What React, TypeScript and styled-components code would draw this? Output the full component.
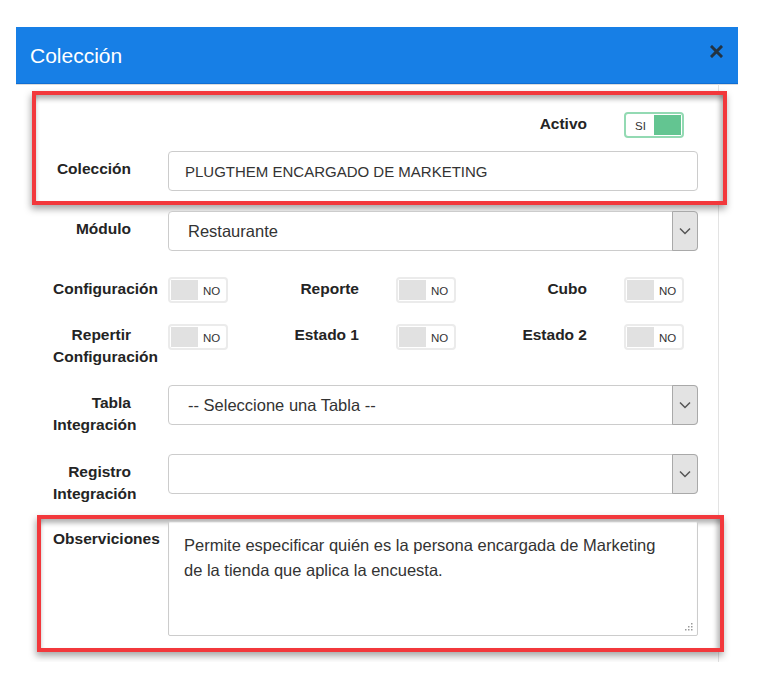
import React from "react";
import styled, { createGlobalStyle } from "styled-components";

const GlobalStyle = createGlobalStyle`
  html, body { margin: 0; padding: 0; background: #fff; }
  body { font-family: "Liberation Sans", Arial, sans-serif; color: #333; }
  *, *::before, *::after { box-sizing: border-box; }
`;

const Modal = styled.div`
  width: 722px;
  margin: 27px 0 0 16px;
`;

const Header = styled.header`
  height: 57px;
  background: #177fe6;
  border-bottom: 1px solid #0f6ed3;
  box-shadow: 0 1px 0 #dcdcdc;
  display: flex;
  justify-content: space-between;
  align-items: flex-start;
  padding: 0 15px 0 14px;
`;

const Title = styled.h4`
  margin: 0;
  font-weight: normal;
  font-size: 21px;
  line-height: 57px;
  color: #fff;
`;

const Close = styled.button`
  margin-top: 18px;
  width: 13px;
  height: 13px;
  padding: 0;
  border: none;
  background: transparent;
  display: flex;
  cursor: pointer;
`;

const Body = styled.div`
  width: 703px;
  padding: 1px 20px 10px 37px;
  border-right: 1px solid #e3e3e3;
  display: flex;
  flex-direction: column;
`;

const Highlight = styled.section<{ $m: string; $p: string; $gap: number }>`
  margin: ${(p) => p.$m};
  padding: ${(p) => p.$p};
  border: 4px solid #f2383c;
  background: #fff;
  display: flex;
  flex-direction: column;
  gap: ${(p) => p.$gap}px;
  box-shadow: inset 0 8px 5px -4px rgba(0, 0, 0, 0.3),
    inset -7px 0 5px -4px rgba(0, 0, 0, 0.28),
    inset 4px 0 4px -4px rgba(0, 0, 0, 0.22),
    -1px 4px 7px rgba(0, 0, 0, 0.35);
`;

const Field = styled.div<{ $mt?: number }>`
  display: flex;
  align-items: flex-start;
  gap: 37px;
  margin-top: ${(p) => p.$mt ?? 0}px;
`;

const Label = styled.label<{ $pt: number }>`
  flex: 0 0 78px;
  width: 78px;
  min-width: 0;
  text-align: right;
  font-weight: bold;
  font-size: 15.5px;
  line-height: 21.5px;
  color: #242424;
  padding-top: ${(p) => p.$pt}px;
`;

const ToggleGrid = styled.div<{ $mt?: number }>`
  display: grid;
  grid-template-columns: 228px 228px 1fr;
  row-gap: 21px;
  margin-top: ${(p) => p.$mt ?? 0}px;
`;

const ToggleCell = styled.div<{ $col?: number }>`
  display: flex;
  align-items: flex-start;
  gap: 37px;
  grid-column: ${(p) => p.$col ?? "auto"};
`;

const Switch = styled.span<{ $on?: boolean }>`
  flex: none;
  width: 60px;
  height: 26px;
  padding: 1px;
  border: 2px solid ${(p) => (p.$on ? "#93dab3" : "#ebebeb")};
  border-radius: 4px;
  background: #fff;
  display: flex;
  flex-direction: ${(p) => (p.$on ? "row-reverse" : "row")};
  align-items: center;
`;

const Knob = styled.span<{ $on?: boolean }>`
  flex: none;
  width: 27px;
  height: 20px;
  background: ${(p) => (p.$on ? "#63c591" : "#e1e1e1")};
`;

const SwitchText = styled.span`
  flex: 1;
  text-align: center;
  font-size: 11.5px;
  line-height: 20px;
  padding-top: 2px;
  color: #333;
`;

const TextInput = styled.input`
  flex: 1;
  min-width: 0;
  height: 40px;
  padding: 0 16px;
  border: 1px solid #cccccc;
  border-radius: 4px;
  font-family: inherit;
  font-size: 15px;
  color: #333;
  background: #fff;
  outline: none;
`;

const SelectBox = styled.div`
  flex: 1;
  min-width: 0;
  height: 40px;
  display: flex;
  border: 1px solid #cccccc;
  border-radius: 4px;
  background: #fff;
`;

const NativeSelect = styled.select`
  flex: 1;
  min-width: 0;
  appearance: none;
  -webkit-appearance: none;
  border: none;
  background: transparent;
  padding: 0 0 0 19px;
  font-family: inherit;
  font-size: 16.5px;
  color: #333;
  outline: none;
`;

const ArrowBox = styled.span`
  flex: none;
  width: 26px;
  margin: -1px -1px -1px 0;
  border: 1px solid #a9a9a9;
  border-radius: 0 4px 4px 0;
  background: #e3e3e3;
  display: flex;
  align-items: center;
  justify-content: center;
`;

const AreaWrap = styled.div`
  flex: 1;
  min-width: 0;
  position: relative;
  display: flex;
`;

const TextArea = styled.textarea`
  width: 100%;
  height: 115px;
  resize: none;
  padding: 11px 15px 9px;
  border: 1px solid #cccccc;
  border-radius: 2px;
  box-shadow: inset 0 1px 1px rgba(0, 0, 0, 0.08);
  font-family: inherit;
  font-size: 16.5px;
  line-height: 25px;
  color: #333;
  outline: none;
`;

const Grip = styled.svg`
  position: absolute;
  right: 5px;
  bottom: 5px;
  pointer-events: none;
`;

const Chevron = () => (
  <svg width="12" height="8" viewBox="0 0 12 8">
    <path d="M1 1.5 L6 6.5 L11 1.5" fill="none" stroke="#555" strokeWidth="1.5" />
  </svg>
);

const Toggle = ({ on, text }: { on?: boolean; text: string }) => (
  <Switch $on={on}>
    <Knob $on={on} />
    <SwitchText>{text}</SwitchText>
  </Switch>
);

const Select = ({ value }: { value: string }) => (
  <SelectBox>
    <NativeSelect value={value} onChange={() => {}}>
      <option value={value}>{value}</option>
    </NativeSelect>
    <ArrowBox>
      <Chevron />
    </ArrowBox>
  </SelectBox>
);

export default function App() {
  return (
    <>
      <GlobalStyle />
      <Modal>
        <Header>
          <Title>Colección</Title>
          <Close aria-label="Cerrar">
            <svg width="13" height="13" viewBox="0 0 13 13">
              <path d="M2 2 L11 11 M11 2 L2 11" stroke="#262626" strokeWidth="3" strokeLinecap="square" opacity="0.85" />
            </svg>
          </Close>
        </Header>
        <Body>
          <Highlight $m="6px -29px 0 -21px" $p="17px 25px 10px 17px" $gap={13}>
            <ToggleGrid>
              <ToggleCell $col={3}>
                <Label $pt={1}>Activo</Label>
                <Toggle on text="SI" />
              </ToggleCell>
            </ToggleGrid>
            <Field>
              <Label $pt={7}>Colección</Label>
              <TextInput defaultValue="PLUGTHEM ENCARGADO DE MARKETING" />
            </Field>
          </Highlight>

          <Field $mt={6}>
            <Label $pt={7}>Módulo</Label>
            <Select value="Restaurante" />
          </Field>

          <ToggleGrid $mt={26}>
            <ToggleCell>
              <Label $pt={1}>Configuración</Label>
              <Toggle text="NO" />
            </ToggleCell>
            <ToggleCell>
              <Label $pt={1}>Reporte</Label>
              <Toggle text="NO" />
            </ToggleCell>
            <ToggleCell>
              <Label $pt={1}>Cubo</Label>
              <Toggle text="NO" />
            </ToggleCell>
            <ToggleCell>
              <Label $pt={0}>Repertir Configuración</Label>
              <Toggle text="NO" />
            </ToggleCell>
            <ToggleCell>
              <Label $pt={0}>Estado 1</Label>
              <Toggle text="NO" />
            </ToggleCell>
            <ToggleCell>
              <Label $pt={0}>Estado 2</Label>
              <Toggle text="NO" />
            </ToggleCell>
          </ToggleGrid>

          <Field $mt={18}>
            <Label $pt={7}>Tabla Integración</Label>
            <Select value="-- Seleccione una Tabla --" />
          </Field>

          <Field $mt={19}>
            <Label $pt={7}>Registro Integración</Label>
            <Select value="" />
          </Field>

          <Highlight $m="11px -26px 0 -16px" $p="2px 22px 12px 12px" $gap={0}>
            <Field>
              <Label $pt={7}>Observiciones</Label>
              <AreaWrap>
                <TextArea
                  readOnly
                  defaultValue={"Permite especificar quién es la persona encargada de Marketing\nde la tienda que aplica la encuesta."}
                />
                <Grip width="8" height="8" viewBox="0 0 8 8">
                  <g fill="#9a9a9a">
                    <rect x="6" y="0" width="1.5" height="1.5" />
                    <rect x="3" y="3" width="1.5" height="1.5" />
                    <rect x="6" y="3" width="1.5" height="1.5" />
                    <rect x="0" y="6" width="1.5" height="1.5" />
                    <rect x="3" y="6" width="1.5" height="1.5" />
                    <rect x="6" y="6" width="1.5" height="1.5" />
                  </g>
                </Grip>
              </AreaWrap>
            </Field>
          </Highlight>
        </Body>
      </Modal>
    </>
  );
}
